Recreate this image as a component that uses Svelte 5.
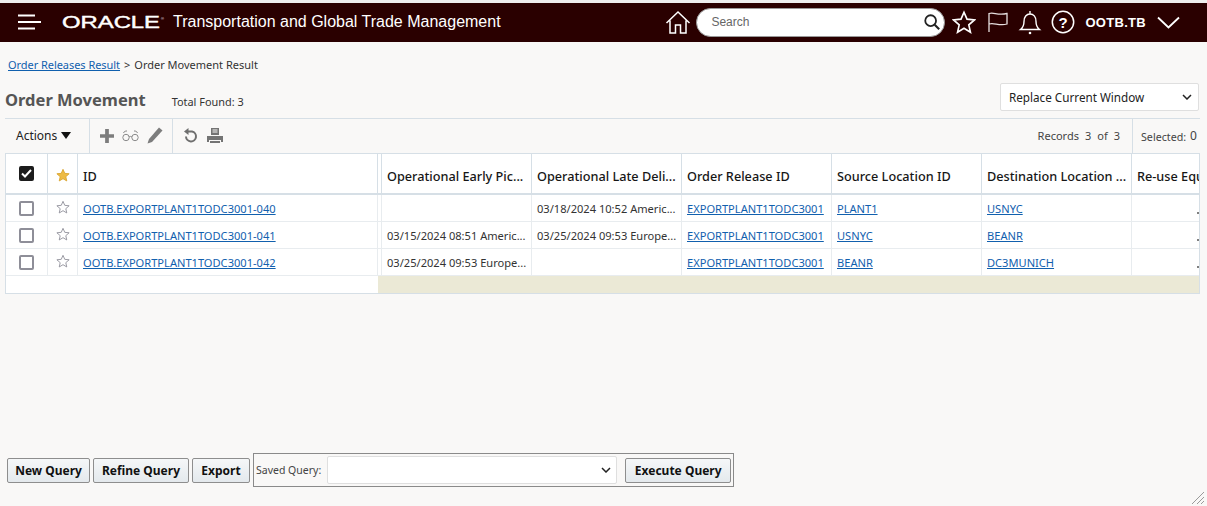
<script>
  const cols = ['Operational Early Pic...', 'Operational Late Deli...', 'Order Release ID', 'Source Location ID', 'Destination Location ...', 'Re-use Equ'];
  const rows = [
    { id: 'OOTB.EXPORTPLANT1TODC3001-040', early: '', late: '03/18/2024 10:52 Americ...', rel: 'EXPORTPLANT1TODC3001', src: 'PLANT1', dst: 'USNYC' },
    { id: 'OOTB.EXPORTPLANT1TODC3001-041', early: '03/15/2024 08:51 Americ...', late: '03/25/2024 09:53 Europe...', rel: 'EXPORTPLANT1TODC3001', src: 'USNYC', dst: 'BEANR' },
    { id: 'OOTB.EXPORTPLANT1TODC3001-042', early: '03/25/2024 09:53 Europe...', late: '', rel: 'EXPORTPLANT1TODC3001', src: 'BEANR', dst: 'DC3MUNICH' }
  ];
  const starPath = 'M8 1.5l2 4.6 5 .5-3.8 3.3 1.1 4.9L8 12.2l-4.3 2.6 1.1-4.9L1 6.6l5-.5z';
</script>

<div class="page">
  <header class="topbar">
    <button class="burger" aria-label="Menu">
      <svg width="24" height="16" viewBox="0 0 24 16"><path d="M0 1.5h17M0 8h23M0 14.5h17" stroke="#fff" stroke-width="2" fill="none"/></svg>
    </button>
    <svg class="logo" width="104" height="20" viewBox="0 0 104 20"><text x="0" y="16" textLength="98" lengthAdjust="spacingAndGlyphs" font-family="Liberation Sans" font-size="17" fill="#fff" stroke="#fff" stroke-width=".45">ORACLE</text><text x="99" y="8" font-size="4" font-family="Liberation Sans" fill="#fff">®</text></svg>
    <span class="product">Transportation and Global Trade Management</span>
    <div class="tools">
      <svg class="home" width="26" height="25" viewBox="0 0 26 25" fill="none" stroke="#fff" stroke-width="1.5"><path d="M1.5 13L13 2l11.500 11M5 10.500V23h5.500v-8h5v8H21V10.500"/></svg>
      <div class="search">
        <span>Search</span>
        <svg width="18" height="18" viewBox="0 0 20 20" fill="none" stroke="#222" stroke-width="2"><circle cx="8.500" cy="8.500" r="6"/><path d="M13 13l5 5" stroke-width="2.400"/></svg>
      </div>
      <svg class="star" width="24" height="24" viewBox="0 0 16 16" fill="none" stroke="#fff" stroke-width="1.100"><path d={starPath}/></svg>
      <svg class="flag" width="22" height="22" viewBox="0 0 22 22" fill="none" stroke="#e6dfdf" stroke-width="1.300"><path d="M2 21V2.500c5-2 8 2.500 18 0V13c-8 2.500-13-2-18 0"/></svg>
      <svg class="bell" width="24" height="26" viewBox="0 0 24 26" fill="none" stroke="#fff" stroke-width="1.400"><path d="M2.500 20.500c2.500-2 3.500-4 3.500-8 0-4.500 2.500-7.500 6-7.500s6 3 6 7.500c0 4 1 6 3.500 8zM12 2v3"/><circle cx="12" cy="24" r="1.300" fill="#fff" stroke="none"/></svg>
      <svg class="help" width="24" height="24" viewBox="0 0 24 24"><circle cx="12" cy="12" r="10.700" fill="none" stroke="#fff" stroke-width="1.500"/><text x="12" y="17.500" text-anchor="middle" font-family="Liberation Sans" font-weight="700" font-size="15" fill="#fff">?</text></svg>
      <span class="user">OOTB.TB</span>
      <svg class="chev" width="23" height="13" viewBox="0 0 23 13" fill="none" stroke="#fff" stroke-width="1.800"><path d="M1 1.500l10.500 10L22 1.500"/></svg>
    </div>
  </header>

  <main class="content">
    <nav class="crumbs"><a href="#a">Order Releases Result</a><span class="sep">&gt;</span><span>Order Movement Result</span></nav>

    <div class="title-row">
      <h1>Order Movement</h1>
      <span class="total">Total Found: 3</span>
      <div class="select window"><span>Replace Current Window</span><svg width="10" height="6" viewBox="0 0 10 6" fill="none" stroke="#222" stroke-width="1.500"><path d="M1 1l4 4 4-4"/></svg></div>
    </div>

    <div class="toolbar">
      <div class="tb-group actions">Actions <svg width="10" height="7" viewBox="0 0 10 7"><path d="M0 0h10L5 7z" fill="#111"/></svg></div>
      <div class="tb-group icons first">
        <svg width="14" height="14" viewBox="0 0 15 15"><path d="M5.500 0h4v5.500H15v4H9.500V15h-4V9.500H0v-4h5.500z" fill="#7d7d7d"/></svg>
        <svg width="17" height="12" viewBox="0 0 17 12" fill="none" stroke="#8a8a8a"><circle cx="4" cy="7.500" r="3.200"/><circle cx="13" cy="7.500" r="3.200"/><path d="M7 7c1-.8 2-.8 3 0M1.500 3C2 1.500 3.500.8 5 1M15.500 3C15 1.500 13.500.8 12 1"/></svg>
        <svg width="16" height="17" viewBox="0 0 16 17"><path d="M12 .5l3.500 3L5 15 .5 16.500 2 12z" fill="#7d7d7d"/></svg>
      </div>
      <div class="tb-group icons second">
        <svg width="16" height="15" viewBox="0 0 16 15" fill="none" stroke="#6f6f6f" stroke-width="2"><path d="M4 3.500h5a5 5 0 1 1-6 5"/><path d="M5.500 0v7L1 3.500z" fill="#6f6f6f" stroke="none"/></svg>
        <svg width="16" height="16" viewBox="0 0 16 16"><path d="M4 0h8v7H4zM0 8h16v6h-2v-2H2v2H0zM3 13h10v2H3z" fill="#747474"/><path d="M5.500 2h5M5.500 4h5" stroke="#f9f8f7"/></svg>
      </div>
      <div class="records"><span>Records</span><span>3</span><span>of</span><span>3</span></div>
      <div class="selected">Selected: <b>0</b></div>
    </div>

    <div class="grid">
      <div class="row head">
        <div class="cell check"><span class="cb on"><svg width="11" height="9" viewBox="0 0 11 9" fill="none" stroke="#fff" stroke-width="2"><path d="M1 4.500l3 3 6-6.500"/></svg></span></div>
        <div class="cell fav"><svg width="14" height="14" viewBox="0 0 16 16"><path d={starPath} fill="#eebb44" stroke="#d9a530"/></svg></div>
        <div class="cell idc">ID</div>
        <div class="split"></div>
        {#each cols as c}<div class="cell col">{c}</div>{/each}
      </div>
      {#each rows as r}
        <div class="row body">
          <div class="cell check"><span class="cb"></span></div>
          <div class="cell fav"><svg width="14" height="14" viewBox="0 0 16 16"><path d={starPath} fill="none" stroke="#8e8e98"/></svg></div>
          <div class="cell idc"><a href="#a">{r.id}</a></div>
          <div class="split"></div>
          <div class="cell col">{r.early}</div>
          <div class="cell col">{r.late}</div>
          <div class="cell col"><a href="#a">{r.rel}</a></div>
          <div class="cell col"><a href="#a">{r.src}</a></div>
          <div class="cell col"><a href="#a">{r.dst}</a></div>
          <div class="cell col last"><i></i></div>
        </div>
      {/each}
      <div class="row filler"><div class="blank"></div><div class="fill"></div></div>
    </div>

    <div class="actionsbar">
      <button class="b1">New Query</button>
      <button class="b2">Refine Query</button>
      <button class="b3">Export</button>
      <div class="saved">
        <label for="sq">Saved Query:</label>
        <div class="select sq" id="sq"><svg width="10" height="6" viewBox="0 0 10 6" fill="none" stroke="#222" stroke-width="1.500"><path d="M1 1l4 4 4-4"/></svg></div>
        <button class="b4">Execute Query</button>
      </div>
    </div>
  </main>
  <svg class="grip" width="14" height="14" viewBox="0 0 14 14" stroke="#9a9a9a" fill="none"><path d="M1 13L13 1M6 13l7-7M10 13l3-3"/></svg>
</div>

<style>
  :global(body) { margin: 0; background: #f9f8f7; }
  .page { height: 506px; width: 1207px; display: flex; flex-direction: column; overflow: hidden; position: relative; font-family: "Noto Sans", sans-serif; font-size: 12px; color: #333; box-sizing: border-box; border-top: 3px solid #eeeeee; }
  .topbar { height: 39px; box-sizing: border-box; padding-bottom: 1px; background: #2a0000; display: flex; align-items: center; padding-left: 18px; padding-right: 27px; color: #fff; flex: none; }
  .burger { all: unset; display: flex; width: 24px; height: 16px; }
  .logo { margin-left: 20px; margin-top: -1px; }
  .product { font-family: "Liberation Sans", sans-serif; font-size: 16px; margin-left: 7px; white-space: nowrap; }
  .tools { margin-left: auto; display: flex; align-items: center; }
  .search { width: 249px; height: 29px; box-sizing: border-box; background: #fff; border: 1px solid #999; border-radius: 15px; display: flex; align-items: center; justify-content: space-between; padding: 0 3px 1px 14px; margin-left: 5px; font-family: "Liberation Sans", sans-serif; font-size: 12px; color: #666; }
  .star { margin-left: 7px; }
  .flag { margin-left: 11px; }
  .bell { margin-left: 9px; }
  .help { margin-left: 9px; }
  .user { margin-left: 10px; font-family: "Liberation Sans", sans-serif; font-weight: 700; font-size: 13px; letter-spacing: .3px; white-space: nowrap; }
  .chev { margin-left: 11px; }
  .content { flex: 1; display: flex; flex-direction: column; padding: 0 7px 0 5px; min-height: 0; }
  .crumbs { padding: 14px 0 0 3px; height: 18px; font-size: 11px; line-height: 18px; color: #333; display: flex; }
  a { color: #1160ae; text-decoration: underline; }
  .crumbs a { letter-spacing: -.05px; }
  .sep { margin: 0 4px; }
  .title-row { display: flex; align-items: center; height: 36px; margin-top: 8px; }
  h1 { margin: 0; font-size: 16.500px; font-weight: 700; color: #555; line-height: 36px; }
  .total { margin-left: 26px; margin-top: 2px; font-size: 10.900px; color: #333; }
  .select { box-sizing: border-box; background: #fff; border: 1px solid #dfdfdf; border-radius: 2px; display: flex; align-items: center; justify-content: space-between; }
  .window { margin-left: auto; margin-right: 1px; width: 199px; height: 28px; padding: 0 6px 0 8px; font-size: 11.700px; color: #222; margin-top: -7px; }
  .toolbar { height: 35px; border-top: 1px solid #d6dfe6; display: flex; align-items: center; flex: none; }
  .tb-group { height: 100%; display: flex; align-items: center; box-sizing: border-box; padding-bottom: 2px; }
  .actions { width: 85px; padding-left: 11px; gap: 4px; color: #222; border-right: 1px solid #d6dfe6; }
  .icons { border-right: 1px solid #d6dfe6; padding-left: 10px; }
  .icons.first { width: 83px; gap: 8px; }
  .icons.second { border: 0; padding-left: 10px; gap: 8px; }
  .records { margin-left: auto; font-size: 11px; display: flex; gap: 6px; color: #444; padding-right: 12px; padding-bottom: 2px; }
  .selected { border-left: 1px solid #d6dfe6; height: 100%; width: 68px; box-sizing: border-box; display: flex; align-items: center; padding-left: 8px; gap: 1px; font-size: 10.700px; color: #444; white-space: pre; }
  .selected b { font-weight: 400; font-size: 12px; margin-top: -3px; }
  .grid { box-sizing: border-box; width: 1195px; height: 141px; border: 1px solid #d6dfe6; background: #fff; overflow: hidden; flex: none; margin-top: -1px; }
  .row { display: grid; grid-template-columns: 42px 30px 300px 4px repeat(5, 150px) 100px; }
  .head { height: 39px; border-bottom: 2px solid #d6dfe6; font-size: 12.700px; font-weight: 500; color: #161616; }
  .body { height: 26px; border-bottom: 1px solid #e8ecef; font-size: 11.100px; color: #333; }
  .cell { box-sizing: border-box; display: flex; align-items: center; white-space: nowrap; overflow: hidden; border-right: 1px solid #e8ecef; }
  .head .cell { border-right-color: #d6dfe6; }
  .head .idc, .head .col { padding-top: 5px; }
  .check, .fav { justify-content: center; }
  .idc, .col { padding-left: 5px; }
  .last { position: relative; border-right: 0; }
  .last i { position: absolute; right: 33px; bottom: 7px; width: 2px; height: 2px; border-radius: 50%; background: #555; }
  .col:last-child { border-right: 0; }
  .split { border-right: 1px solid #e8ecef; }
  .head .split { border-right-color: #d6dfe6; }
  .cb { box-sizing: border-box; width: 15px; height: 15px; border: 2px solid #8e8e98; border-radius: 2px; display: flex; align-items: center; justify-content: center; background: #fff; }
  .cb.on { background: #1c1c1c; border-color: #1c1c1c; }
  .fav svg { margin-top: -3px; }
  .head .fav svg { margin-top: 2px; }
  .filler { display: flex; height: 17px; }
  .blank { width: 372px; flex: none; }
  .fill { flex: 1; background: #ebe9d6; }
  .actionsbar { margin-top: auto; margin-bottom: 19px; display: flex; align-items: center; gap: 3px; padding-left: 2px; }
  button { all: unset; box-sizing: border-box; height: 25px; border: 1px solid #8e8e8e; border-radius: 2px; background: linear-gradient(#f5f7f8, #e4e9ed); font-family: "Noto Sans", sans-serif; font-size: 12px; font-weight: 700; color: #111; display: flex; align-items: center; justify-content: center; white-space: nowrap; }
  .b1 { width: 83px; }
  .b2 { width: 96px; }
  .b3 { width: 58px; }
  .b4 { width: 106px; }
  .saved { box-sizing: border-box; border: 1px solid #8a8a8a; height: 34px; width: 481px; display: flex; align-items: center; padding-left: 2px; font-size: 10.500px; color: #444; }
  .sq { width: 290px; height: 28px; margin-left: 6px; padding: 0 5px 0 0; justify-content: flex-end; margin-right: 8px; }
  .grip { position: absolute; right: 2px; bottom: 1px; }
</style>
